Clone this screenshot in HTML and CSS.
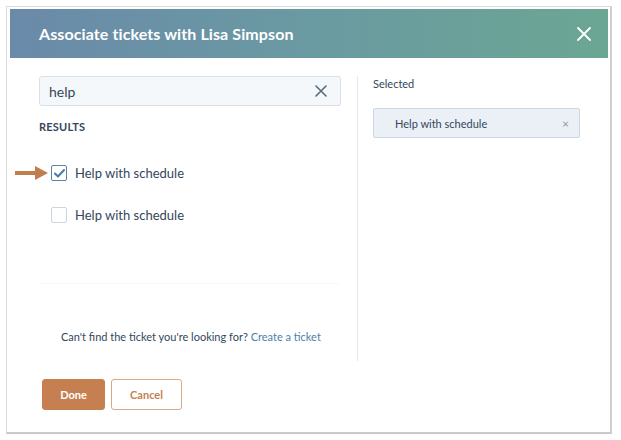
FILE: index.html
```html
<!DOCTYPE html>
<html>
<head>
<meta charset="utf-8">
<link rel="stylesheet" href="styles.css">
</head>
<body>
<div class="frame">
  <div class="header">
    <span class="title">Associate tickets with Lisa Simpson</span>
    <svg class="close" width="14" height="14" viewBox="0 0 14 14"><path d="M1 1L13 13M13 1L1 13" stroke="#fff" stroke-width="1.8" stroke-linecap="round"/></svg>
  </div>
  <div class="body">
    <div class="left">
      <div class="search">
        <span class="search-text">help</span>
        <svg width="12" height="12" viewBox="0 0 12 12"><path d="M1 1L11 11M11 1L1 11" stroke="#5b6b7c" stroke-width="1.6" stroke-linecap="round"/></svg>
      </div>
      <div class="results-label">RESULTS</div>
      <div class="results">
        <div class="row">
          <svg class="arrow" width="34" height="14" viewBox="0 0 34 14"><path d="M0 7H22" stroke="#c07d4f" stroke-width="4"/><path d="M20 0L33 7L20 14Z" fill="#c07d4f"/></svg>
          <span class="cb checked"><svg width="11" height="9" viewBox="0 0 11 9"><path d="M1 4.5L4 7.5L10 1" fill="none" stroke="#4a7ba6" stroke-width="2" stroke-linecap="round" stroke-linejoin="round"/></svg></span>
          <span class="row-text">Help with schedule</span>
        </div>
        <div class="row">
          <span class="cb"></span>
          <span class="row-text">Help with schedule</span>
        </div>
      </div>
      <div class="cant">Can't find the ticket you're looking for? <span class="link">Create a ticket</span></div>
    </div>
    <div class="divider"></div>
    <div class="right">
      <div class="selected-label">Selected</div>
      <div class="chip"><span>Help with schedule</span><span class="chip-x">×</span></div>
    </div>
  </div>
  <div class="footer">
    <button class="btn done">Done</button>
    <button class="btn cancel">Cancel</button>
  </div>
</div>
</body>
</html>
```
FILE: styles.css
```css
* { box-sizing: border-box; }
html, body { margin: 0; background: #fff; }
body { padding: 6px 9px 6px 6px; font-family: Lato, "Open Sans", sans-serif; color: #33475b; }
.frame {
  width: 606px; height: 428px;
  border: 1px solid #dcdcdc;
  border-bottom: 2px solid #c9c9c9;
  border-right: 2px solid #d0d0d0;
  padding: 2px 2px 0 3px;
  display: flex; flex-direction: column;
}
.header {
  height: 49px;
  background: linear-gradient(90deg, #6a8aa9 0%, #6a9aa2 50%, #6ba693 100%);
  display: flex; align-items: center; justify-content: space-between;
  padding: 0 17px 0 29px;
}
.title { color: #fff; font-weight: 700; font-size: 16px; letter-spacing: 0.1px; }
.close { display: block; }
.body { display: flex; height: 302px; padding-top: 18px; }
.left { width: 347px; padding-left: 29px; display: flex; flex-direction: column; }
.search {
  width: 302px; height: 30px;
  border: 1px solid #d9e0e8; background: #f5f8fa; border-radius: 3px;
  display: flex; align-items: center; justify-content: space-between;
  padding: 0 13px 0 9px;
}
.search-text { font-size: 14px; color: #33475b; }
.results-label { margin-top: 14px; font-size: 11px; font-weight: 700; color: #33475b; letter-spacing: 0.2px; }
.results { margin-top: 32px; width: 302px; height: 119px; border-bottom: 1px solid #f9f9f9; display: flex; flex-direction: column; gap: 26px; }
.row { display: flex; align-items: center; height: 16px; padding-left: 12px; position: relative; }
.arrow { position: absolute; left: -24px; top: 1px; }
.cb { width: 16px; height: 16px; border: 1px solid #cbd6e2; border-radius: 2px; background: #fff; display: flex; align-items: center; justify-content: center; }
.cb.checked { border: 1.5px solid #5b83a8; }
.row-text { margin-left: 8px; font-size: 13px; color: #33475b; }
.cant { margin-top: 46px; font-size: 11px; color: #33475b; padding-left: 22px; }
.link { color: #4d7fa6; }
.divider { width: 1px; background: #e5e8eb; margin-top: 0; height: 285px; }
.right { padding-left: 15px; }
.selected-label { font-size: 11px; color: #33475b; margin-top: 1px; }
.chip {
  margin-top: 18px; width: 207px; height: 30px;
  background: #eaf0f6; border: 1px solid #cbd6e2; border-radius: 2px;
  display: flex; align-items: center; justify-content: space-between;
  padding: 0 10px 0 21px; font-size: 11px; color: #33475b;
}
.chip-x { color: #8a9aab; font-size: 12px; }
.footer { display: flex; gap: 6px; padding: 19px 0 0 32px; }
.btn { height: 31px; border-radius: 3px; font-family: inherit; font-size: 11px; font-weight: 700; padding: 0; }
.done { width: 63px; background: #c67f51; color: #fff; border: 1px solid #c67f51; }
.cancel { width: 71px; background: #fff; color: #c67f51; border: 1px solid #d9a887; }
```
